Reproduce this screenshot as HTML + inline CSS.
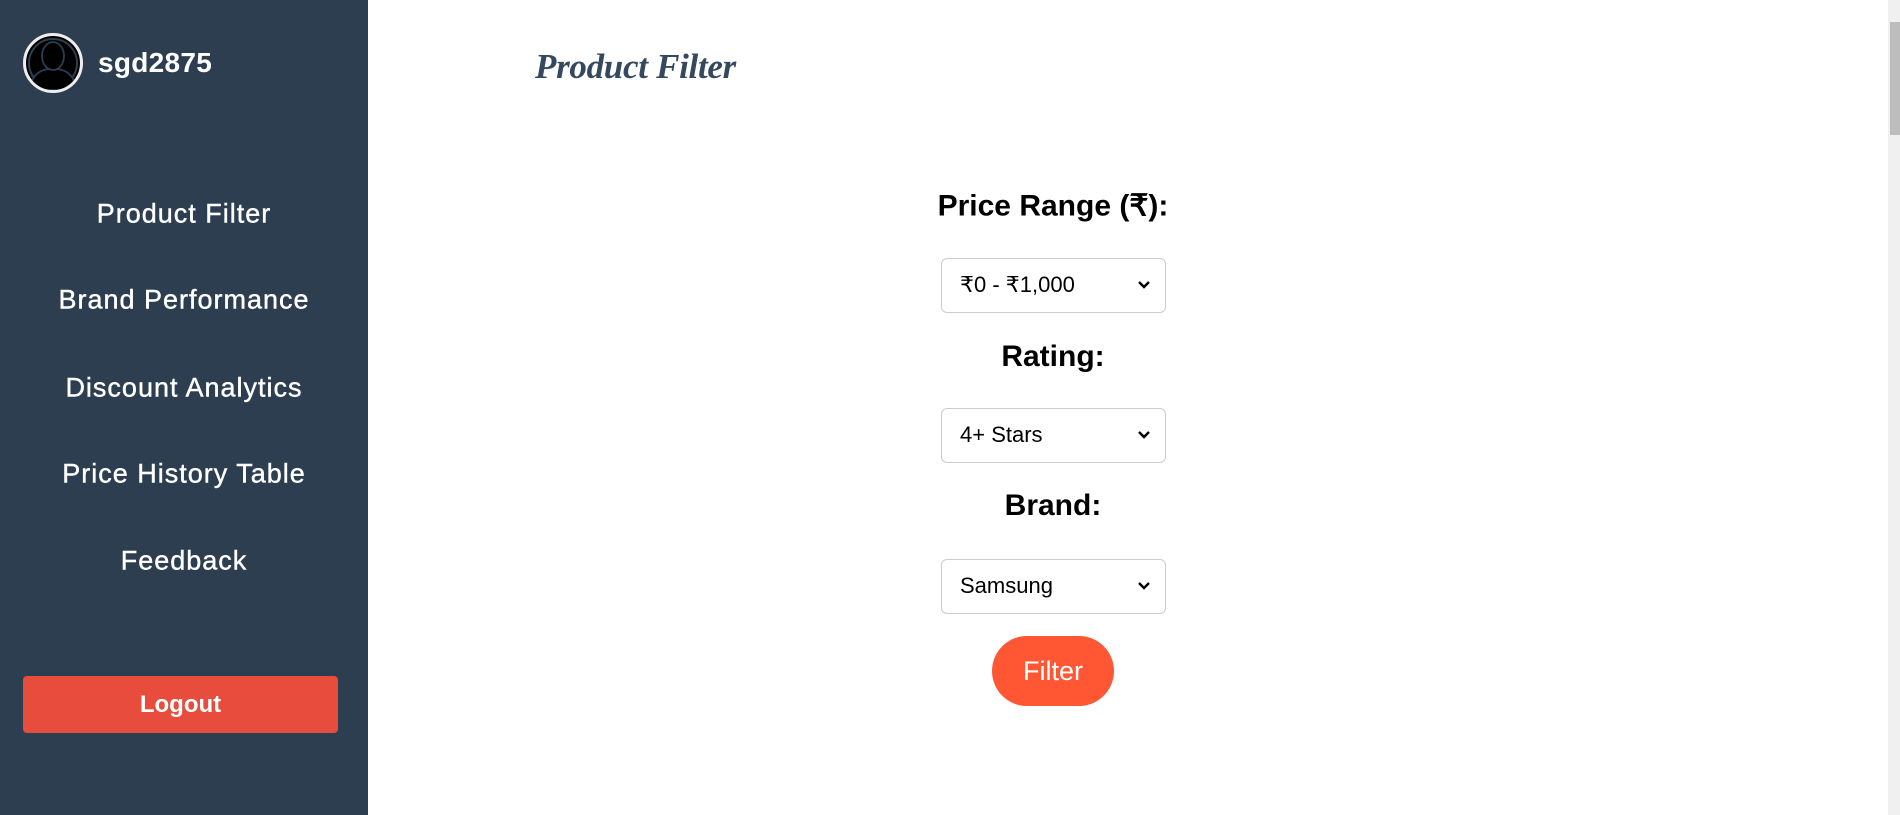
<!DOCTYPE html>
<html><head><meta charset="utf-8"><style>
*{margin:0;padding:0;box-sizing:border-box}
html,body{width:1900px;height:815px;overflow:hidden;background:#fff;font-family:"Liberation Sans",sans-serif}
.side{position:absolute;left:0;top:0;width:368px;height:815px;background:#2c3e50;color:#fff}
.av{position:absolute;left:23px;top:33px;width:60px;height:60px;border-radius:50%;border:3px solid #eee;background:#000;overflow:hidden}
.user{position:absolute;left:98px;top:47px;font-size:28px;font-weight:bold;letter-spacing:0.3px}
.nav{position:absolute;left:0;width:368px;text-align:center;font-size:27px;letter-spacing:1px;transform:translateY(-50%);-webkit-text-stroke:0.4px #fff}
.logout{position:absolute;left:23px;top:676px;width:315px;height:57px;background:#e74c3c;border-radius:4px;color:#fff;font-weight:bold;font-size:24px;text-align:center;line-height:57px}
.title{position:absolute;left:535px;top:47px;font-family:"Liberation Serif",serif;font-style:italic;font-weight:bold;font-size:35px;color:#34495e;letter-spacing:-0.3px}
.lbl{position:absolute;left:853px;width:400px;text-align:center;font-weight:bold;font-size:30px;color:#000;transform:translateY(-50%)}
.sel{position:absolute;left:941px;width:225px;height:55px;border:1.5px solid #ccc;border-radius:6px;font-size:22px;line-height:52px;padding-left:18px;color:#000}
.sel svg{position:absolute;right:14px;top:21px}
.btn{position:absolute;left:992px;top:636px;width:122px;height:70px;border-radius:35px;background:#ff5733;color:#fff;font-size:27px;text-align:center;line-height:70px}
.sb{position:absolute;left:1888px;top:0;width:12px;height:815px;background:#f0f0f0}
.th{position:absolute;left:1890px;top:22px;width:10px;height:113px;background:#bdbdbd}
</style></head><body>
<div class="side">
<div class="av"><svg width="54" height="54" viewBox="0 0 54 54"><circle cx="27" cy="27" r="24" fill="#000" stroke="#2c3e50" stroke-width="2"/><path d="M6 45 Q10 35 22 33 L32 33 Q44 35 48 45 L48 54 L6 54Z" fill="#000" stroke="#2c3e50" stroke-width="1.8"/><ellipse cx="27" cy="20" rx="11" ry="14" fill="#000" stroke="#2c3e50" stroke-width="1.8"/></svg></div>
<div class="user">sgd2875</div>
<div class="nav" style="top:214px">Product Filter</div>
<div class="nav" style="top:300px">Brand Performance</div>
<div class="nav" style="top:388px">Discount Analytics</div>
<div class="nav" style="top:474px">Price History Table</div>
<div class="nav" style="top:561px">Feedback</div>
<div class="logout">Logout</div>
</div>
<div class="title">Product Filter</div>
<div class="lbl" style="top:206px">Price Range (₹):</div>
<div class="sel" style="top:258px">₹0 - ₹1,000<svg width="14" height="9" viewBox="0 0 14 9"><path d="M2 2 L7 7 L12 2" fill="none" stroke="#000" stroke-width="2.4"/></svg></div>
<div class="lbl" style="top:357px">Rating:</div>
<div class="sel" style="top:408px">4+ Stars<svg width="14" height="9" viewBox="0 0 14 9"><path d="M2 2 L7 7 L12 2" fill="none" stroke="#000" stroke-width="2.4"/></svg></div>
<div class="lbl" style="top:506px">Brand:</div>
<div class="sel" style="top:559px">Samsung<svg width="14" height="9" viewBox="0 0 14 9"><path d="M2 2 L7 7 L12 2" fill="none" stroke="#000" stroke-width="2.4"/></svg></div>
<div class="btn">Filter</div>
<div class="sb"></div><div class="th"></div>
</body></html>
